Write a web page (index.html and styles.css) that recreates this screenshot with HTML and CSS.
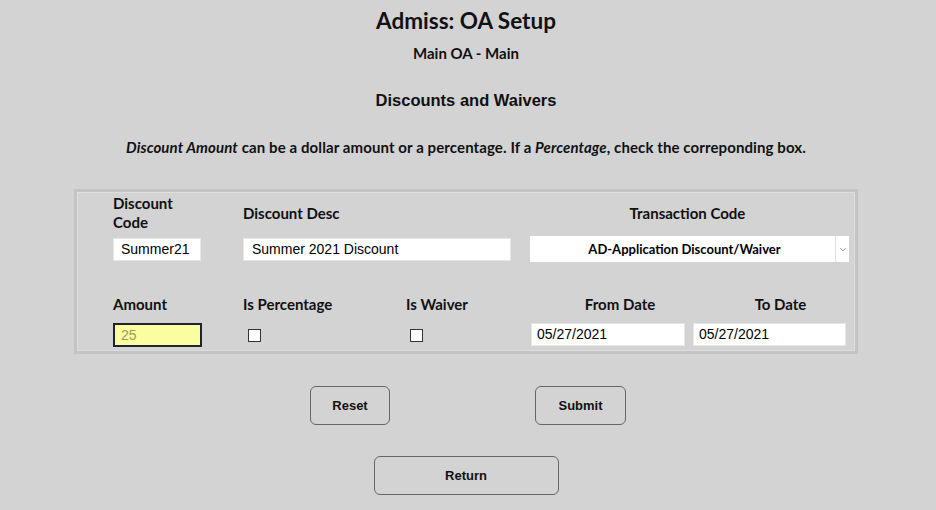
FILE: index.html
```html
<!DOCTYPE html>
<html>
<head>
<meta charset="utf-8">
<link rel="stylesheet" href="styles.css">
</head>
<body>
<div class="page">
  <h1 class="title">Admiss: OA Setup</h1>
  <div class="subtitle">Main OA - Main</div>
  <h2 class="section">Discounts and Waivers</h2>
  <p class="note"><i>Discount Amount</i> can be a dollar amount or a percentage. If a <i>Percentage</i>, check the correponding box.</p>

  <div class="panel">
    <div class="grid">
      <div class="lbl r1 c1">Discount<br>Code</div>
      <div class="lbl r1 c2">Discount Desc</div>
      <div class="lbl r1 c45 center">Transaction Code</div>

      <div class="r2 c1"><div class="field code">Summer21</div></div>
      <div class="r2 c23"><div class="field desc">Summer 2021 Discount</div></div>
      <div class="r2 c45">
        <div class="select">
          <span class="select-text">AD-Application Discount/Waiver</span>
          <span class="select-arrow"><svg width="8" height="5" viewBox="0 0 8 5"><path d="M1 1 L4 4 L7 1" fill="none" stroke="#aaa" stroke-width="1"/></svg></span>
        </div>
      </div>

      <div class="lbl r3 c1">Amount</div>
      <div class="lbl r3 c2">Is Percentage</div>
      <div class="lbl r3 c3">Is Waiver</div>
      <div class="lbl r3 c4 center from-lbl">From Date</div>
      <div class="lbl r3 c5 center to-lbl">To Date</div>

      <div class="r4 c1"><div class="field amount">25</div></div>
      <div class="r4 c2"><span class="check"></span></div>
      <div class="r4 c3"><span class="check"></span></div>
      <div class="r4 c4"><div class="field date from">05/27/2021</div></div>
      <div class="r4 c5"><div class="field date to">05/27/2021</div></div>
    </div>
  </div>

  <div class="actions">
    <button class="btn reset">Reset</button>
    <button class="btn submit">Submit</button>
  </div>
  <div class="actions2">
    <button class="btn ret">Return</button>
  </div>
</div>
</body>
</html>
```

FILE: styles.css
```css
html, body {
  margin: 0;
  padding: 0;
  background: #d3d3d3;
}
body {
  width: 936px;
  height: 510px;
  overflow: hidden;
  font-family: "Lato", "Liberation Sans", sans-serif;
  color: #111;
}
.page {
  display: flex;
  flex-direction: column;
  align-items: center;
  width: 932px;
}
.title {
  margin: 8px 0 0;
  font-size: 22.5px;
  line-height: 26px;
  font-weight: 700;
}
.subtitle {
  margin-top: 10px;
  font-size: 15px;
  line-height: 18px;
  font-weight: 700;
}
.section {
  margin: 28px 0 0;
  font-family: "Liberation Sans", Arial, sans-serif;
  font-size: 16.5px;
  line-height: 20px;
  font-weight: 700;
}
.note {
  margin: 28px 0 0;
  font-size: 15px;
  letter-spacing: 0.1px;
  line-height: 18px;
  font-weight: 700;
}
.panel {
  margin-top: 33px;
  width: 778px;
  height: 159px;
  border: 3px solid #c4c4c4;
  box-shadow: inset 1px 1px 0 #dedede, inset -1px -1px 0 #dedede;
  box-sizing: content-box;
}
.grid {
  display: grid;
  grid-template-columns: 130px 163px 124px 162px 157px;
  grid-template-rows: 42px 30px 54px 33px;
  padding-left: 36px;
}
.lbl {
  font-size: 15px;
  font-weight: 700;
  line-height: 19px;
  align-self: center;
  color: #111;
}
.center { text-align: center; }
.r1 { grid-row: 1; }
.r2 { grid-row: 2; align-self: center; }
.r3 { grid-row: 3; align-self: end; line-height: 28px; }
.r4 { grid-row: 4; align-self: center; }
.c1 { grid-column: 1; }
.c2 { grid-column: 2; }
.c3 { grid-column: 3; }
.c4 { grid-column: 4; }
.c5 { grid-column: 5; }
.c23 { grid-column: 2 / 4; }
.c45 { grid-column: 4 / 6; }
.r1.c45 { padding-right: 4px; }
.from-lbl { padding-left: 18px; }
.to-lbl { padding-left: 20px; }

.field {
  background: #fff;
  border: 1px solid #e6e6e6;
  box-sizing: border-box;
  height: 23px;
  font-family: "Liberation Sans", Arial, sans-serif;
  font-size: 14px;
  line-height: 21px;
  padding-left: 7px;
  color: #000;
}
.code { width: 88px; }
.desc { width: 268px; padding-left: 8px; }
.amount {
  width: 89px;
  height: 24px;
  background: #fafea0;
  border: 2px solid #1e2430;
  color: #9a9a60;
  padding-left: 6px;
  line-height: 20px;
}
.date { width: 154px; padding-left: 5px; }
.from { margin-left: 1px; }
.to { width: 153px; margin-left: 1px; }
.check {
  display: block;
  width: 11px;
  height: 11px;
  border: 1px solid #333;
  background: #fff;
  margin-left: 5px;
  margin-top: 2px;
}
.c3 .check { margin-left: 4px; }

.select {
  display: flex;
  width: 319px;
  height: 26px;
  background: #fff;
  box-sizing: border-box;
}
.select-text {
  flex: 1;
  text-align: center;
  font-size: 13px;
  font-weight: 700;
  line-height: 27px;
  color: #000;
  padding-left: 4px;
}
.select-arrow {
  width: 13px;
  border-left: 1px solid #e0e0e0;
  display: flex;
  align-items: center;
  justify-content: center;
}

.actions {
  display: flex;
  margin-top: 32px;
  width: 316px;
  justify-content: space-between;
  margin-left: 4px;
}
.actions2 {
  margin-top: 31px;
  margin-left: 0;
}
.btn {
  background: transparent;
  border: 1px solid #666;
  border-radius: 6px;
  font-family: "Liberation Sans", Arial, sans-serif;
  font-size: 13px;
  font-weight: 700;
  color: #111;
  height: 39px;
  padding: 0;
}
.reset { width: 80px; }
.submit { width: 91px; }
.ret { width: 185px; }
```
